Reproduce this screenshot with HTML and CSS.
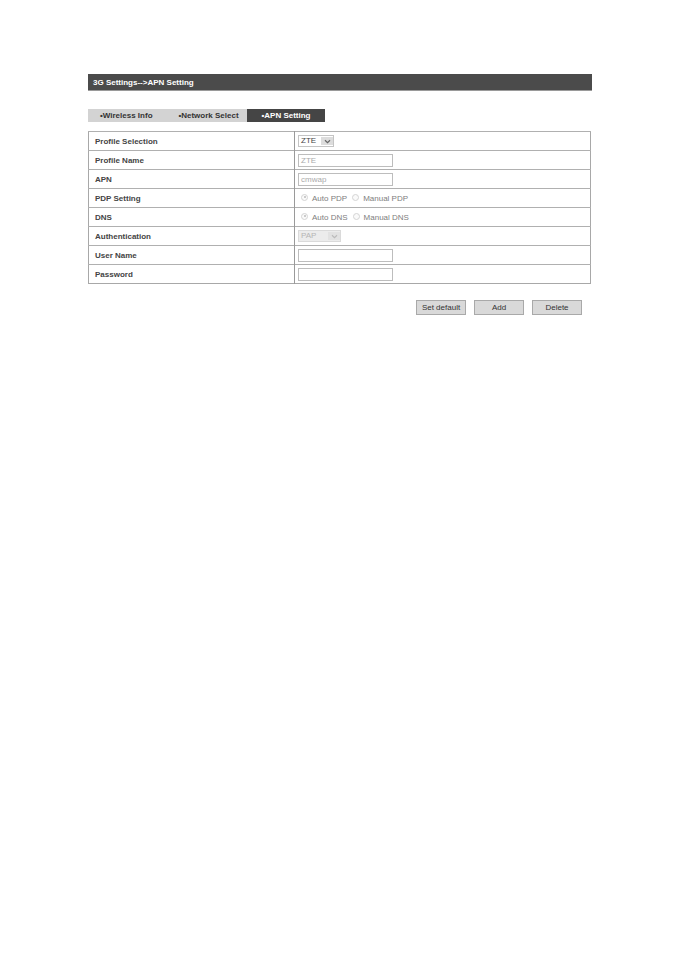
FILE: index.html
```html
<!DOCTYPE html>
<html>
<head>
<meta charset="utf-8">
<link rel="stylesheet" href="styles.css">
</head>
<body>
<div class="page">
  <div class="titlebar">3G Settings--&gt;APN Setting</div>
  <div class="tabs">
    <div class="tab tab-wireless">•Wireless Info</div>
    <div class="tab tab-network">•Network Select</div>
    <div class="tab tab-apn active">•APN Setting</div>
  </div>
  <table class="form">
    <tr>
      <td class="label">Profile Selection</td>
      <td class="field"><span class="select sel-zte"><span class="sel-text">ZTE</span><span class="sel-btn"><svg width="7" height="5" viewBox="0 0 7 5"><path d="M1 1.2 L3.5 3.6 L6 1.2" fill="none" stroke="#666" stroke-width="1.2"/></svg></span></span></td>
    </tr>
    <tr>
      <td class="label">Profile Name</td>
      <td class="field"><span class="input disabled">ZTE</span></td>
    </tr>
    <tr>
      <td class="label">APN</td>
      <td class="field"><span class="input disabled">cmwap</span></td>
    </tr>
    <tr>
      <td class="label">PDP Setting</td>
      <td class="field"><span class="radio checked"></span><span class="rlabel">Auto PDP</span><span class="radio"></span><span class="rlabel">Manual PDP</span></td>
    </tr>
    <tr>
      <td class="label">DNS</td>
      <td class="field"><span class="radio checked"></span><span class="rlabel">Auto DNS</span><span class="radio"></span><span class="rlabel">Manual DNS</span></td>
    </tr>
    <tr>
      <td class="label">Authentication</td>
      <td class="field"><span class="select sel-pap"><span class="sel-text">PAP</span><span class="sel-btn light"><svg width="7" height="5" viewBox="0 0 7 5"><path d="M1 1.2 L3.5 3.6 L6 1.2" fill="none" stroke="#bbb" stroke-width="1.2"/></svg></span></span></td>
    </tr>
    <tr>
      <td class="label">User Name</td>
      <td class="field"><span class="input"></span></td>
    </tr>
    <tr>
      <td class="label">Password</td>
      <td class="field"><span class="input"></span></td>
    </tr>
  </table>
  <div class="actions">
    <button class="btn">Set default</button>
    <button class="btn">Add</button>
    <button class="btn">Delete</button>
  </div>
</div>
</body>
</html>
```

FILE: styles.css
```css
html, body {
  margin: 0;
  padding: 0;
  background: #ffffff;
}
body {
  font-family: "Liberation Sans", Arial, sans-serif;
  font-size: 8px;
  color: #444;
}
.page {
  width: 504px;
  margin-left: 88px;
  padding-top: 74px;
}
.titlebar {
  height: 17px;
  line-height: 17px;
  background: #4b4b4b;
  color: #fff;
  font-weight: bold;
  padding-left: 5px;
  border-bottom: 1px solid #9a9a9a;
  box-sizing: border-box;
}
.tabs {
  display: flex;
  margin-top: 18px;
  height: 13px;
}
.tab {
  height: 13px;
  line-height: 13px;
  font-weight: bold;
  background: #d3d3d3;
  color: #333;
  text-align: center;
}
.tab-wireless { width: 82px; text-align: left; padding-left: 12px; box-sizing: border-box; }
.tab-network { width: 77px; }
.tab-apn { width: 78px; }
.tab.active {
  background: #454545;
  color: #fff;
}
.form {
  margin-top: 9px;
  width: 503px;
  border-collapse: collapse;
  border: 1px solid #a8a8a8;
}
.form td {
  height: 18px;
  padding: 0;
  border-top: 1px solid #b0b0b0;
  vertical-align: middle;
}
.form td.label {
  width: 199px;
  padding-left: 6px;
  font-weight: bold;
  color: #444;
  border-right: 1px solid #9a9a9a;
}
.form td.field {
  padding-left: 3px;
  color: #888;
}
.input {
  display: block;
  width: 95px;
  height: 13px;
  border: 1px solid #bdbdbd;
  box-sizing: border-box;
  line-height: 11px;
  padding-left: 2px;
  color: #aaa;
  background: #fff;
}
.select {
  display: flex;
  align-items: center;
  height: 12px;
  border: 1px solid #c4c4c4;
  box-sizing: border-box;
  background: #fff;
}
.sel-zte { width: 36px; }
.sel-zte .sel-text { color: #444; width: 20px; padding-left: 2px; }
.sel-pap { width: 43px; background: #ececec; border-color: #dadada; }
.sel-pap .sel-text { color: #b5b5b5; width: 27px; padding-left: 2px; }
.sel-text {
  line-height: 10px;
  font-size: 8px;
}
.sel-btn {
  width: 12px;
  height: 8px;
  background: #dcdcdc;
  display: flex;
  align-items: center;
  justify-content: center;
}
.sel-btn.light { background: #e2e2e2; }
.radio {
  display: inline-block;
  width: 7px;
  height: 7px;
  border: 1px solid #d4d4d4;
  border-radius: 50%;
  vertical-align: middle;
  margin-left: 3px;
  margin-right: 4px;
  position: relative;
  top: -1px;
  box-sizing: border-box;
  background: #fafafa;
}
.radio.checked::after {
  content: "";
  position: absolute;
  left: 1.5px;
  top: 1.5px;
  width: 2px;
  height: 2px;
  border-radius: 50%;
  background: #bbb;
}
.rlabel {
  color: #7e7e7e;
  margin-right: 2px;
  vertical-align: middle;
}
.actions {
  display: flex;
  justify-content: flex-end;
  gap: 8px;
  margin-top: 16px;
  padding-right: 10px;
}
.btn {
  width: 50px;
  height: 15px;
  padding: 0;
  font-family: "Liberation Sans", Arial, sans-serif;
  font-size: 8px;
  color: #333;
  background: #d9d9d9;
  border: 1px solid #a9a9a9;
  box-sizing: border-box;
}
```
